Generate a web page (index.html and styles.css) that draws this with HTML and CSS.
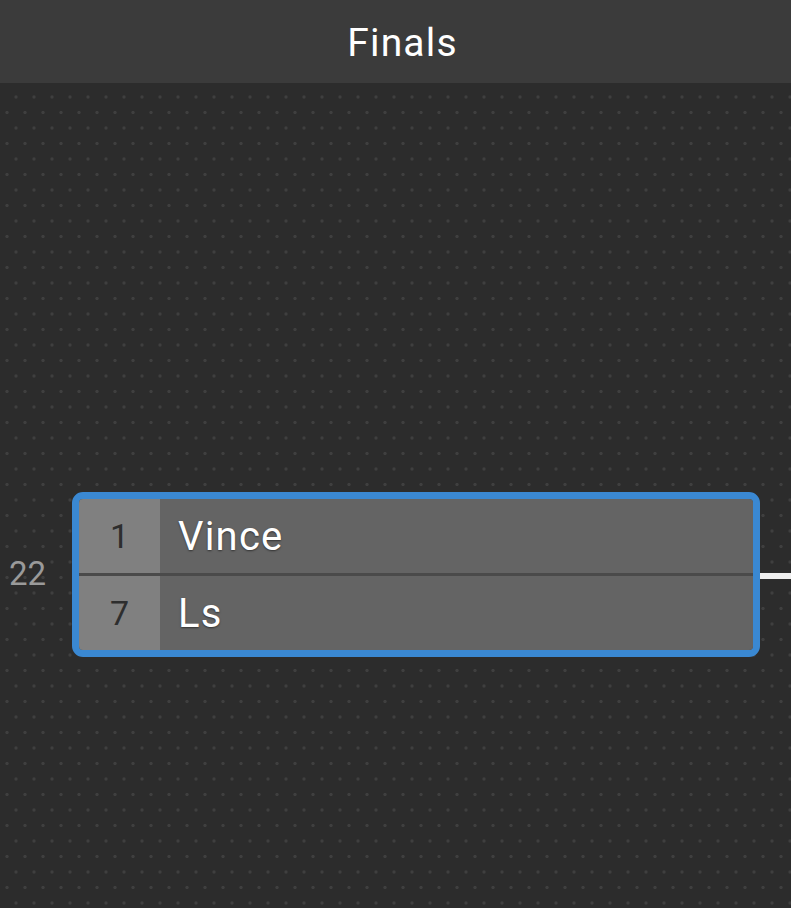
FILE: index.html
```html
<!DOCTYPE html>
<html lang="en">
<head>
    <meta charset="UTF-8">
    <meta name="viewport" content="width=device-width, initial-scale=1.0">
    <title>Finals</title>
    <link rel="stylesheet" href="styles.css">
</head>
<body>
    <div class="round-header">Finals</div>

    <div class="bracket">
        <div class="match-row">
            <div class="match-number">22</div>
            <div class="match-card">
                <div class="team">
                    <div class="seed">1</div>
                    <div class="team-name">Vince</div>
                </div>
                <div class="team">
                    <div class="seed">7</div>
                    <div class="team-name">Ls</div>
                </div>
            </div>
            <div class="connector"></div>
        </div>
    </div>
</body>
</html>
```

FILE: styles.css
```css
* {
    margin: 0;
    padding: 0;
    box-sizing: border-box;
}

body {
    font-family: Roboto, 'Liberation Sans', sans-serif;
    background-color: #2c2c2c;
    background-image:
        radial-gradient(circle, rgba(255,255,255,0.09) 1.3px, transparent 2px),
        radial-gradient(circle, rgba(255,255,255,0.09) 1.3px, transparent 2px);
    background-size: 18px 31px;
    background-position: -2px 4px, 7px 19.5px;
    min-height: 100vh;
    overflow: hidden;
}

.round-header {
    height: 83px;
    background: #3b3b3b;
    color: #fff;
    font-size: 39px;
    letter-spacing: 1.2px;
    display: flex;
    align-items: center;
    justify-content: center;
    padding-left: 14px;
    padding-top: 2px;
}

.bracket { padding-top: 409px; }

.match-row { display: flex; align-items: center; }

.match-number {
    width: 72px;
    padding-left: 9px;
    color: #9a9a9a;
    font-size: 33px;
    margin-top: -2px;
}

.match-card {
    width: 688px;
    border: 7px solid #3a88d2;
    border-radius: 11px;
    background: #4a4a4a;
    overflow: hidden;
    display: flex;
    flex-direction: column;
    gap: 3px;
}

.team { display: flex; height: 74px; }

.seed {
    width: 81px;
    background: #808080;
    color: #2e2e2e;
    font-size: 34px;
    display: flex;
    align-items: center;
    justify-content: center;
}

.team-name {
    flex: 1;
    background: #646464;
    color: #fff;
    font-size: 40px;
    letter-spacing: 1.2px;
    padding-left: 18px;
    display: flex;
    align-items: center;
    text-shadow: 0 1px 2px rgba(0,0,0,0.5);
}

.connector {
    flex: 1;
    height: 6px;
    margin-top: 3px;
    background: #eeeeee;
}
```
